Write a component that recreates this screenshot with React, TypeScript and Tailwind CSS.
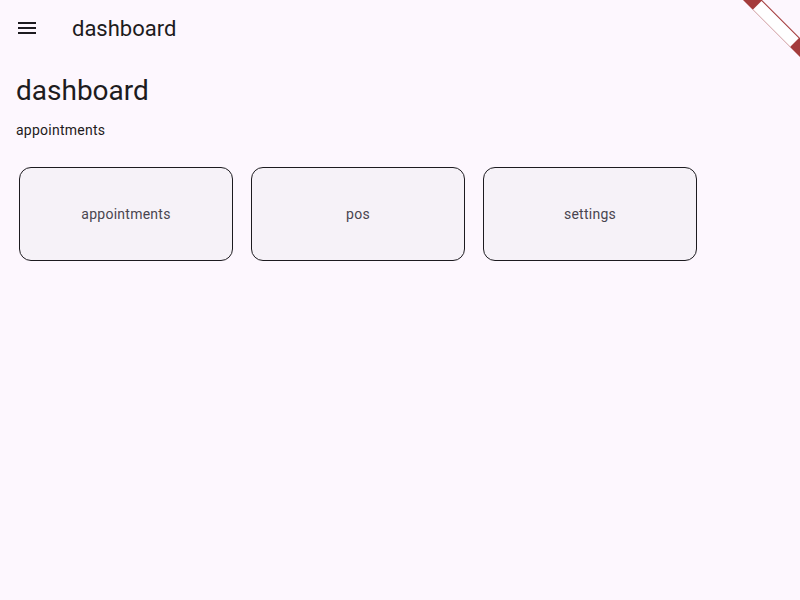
const tiles = ["appointments", "pos", "settings"];

function MenuIcon() {
  return (
    <svg width="24" height="24" viewBox="0 0 24 24" className="fill-[#1d1b20]">
      <path d="M3 18h18v-2H3v2zm0-5h18v-2H3v2zm0-7v2h18V6H3z" />
    </svg>
  );
}

function DebugBanner() {
  return (
    <svg
      width="60"
      height="60"
      viewBox="0 0 60 60"
      className="absolute top-0 right-0 pointer-events-none"
    >
      <polygon points="3,0 22,0 60,38 60,57" fill="#a43c3c" />
      <polygon points="13,9.5 21.5,1 58.75,38.25 50.25,46.75" fill="#ffffff" />
      <line x1="13" y1="9.5" x2="50.25" y2="46.75" stroke="#ead7da" strokeWidth="0.8" />
    </svg>
  );
}

export default function App() {
  return (
    <div className="relative w-[800px] h-[600px] overflow-hidden bg-[#fdf7fe] text-[#1d1b20] font-['Roboto',sans-serif]">
      <header className="h-14 flex items-center">
        <div className="w-[54px] flex justify-center items-center">
          <div className="w-12 h-12 flex items-center justify-center">
            <MenuIcon />
          </div>
        </div>
        <h1 className="ml-[18px] text-[22px] leading-7 pt-px">dashboard</h1>
      </header>

      <main className="px-4 pt-[17px]">
        <h2 className="text-[28px] leading-9">dashboard</h2>
        <p className="mt-[11px] text-sm leading-5 tracking-[0.25px]">appointments</p>

        <div className="mt-[27px] flex gap-[18px] pl-[3px]">
          {tiles.map((t) => (
            <div
              key={t}
              className="w-[214px] h-[94px] rounded-xl border border-[#1d1b20] bg-[#f6f2f8] flex items-center justify-center"
            >
              <span className="text-sm leading-5 tracking-[0.25px] text-[#49454f]">{t}</span>
            </div>
          ))}
        </div>
      </main>

      <DebugBanner />
    </div>
  );
}
